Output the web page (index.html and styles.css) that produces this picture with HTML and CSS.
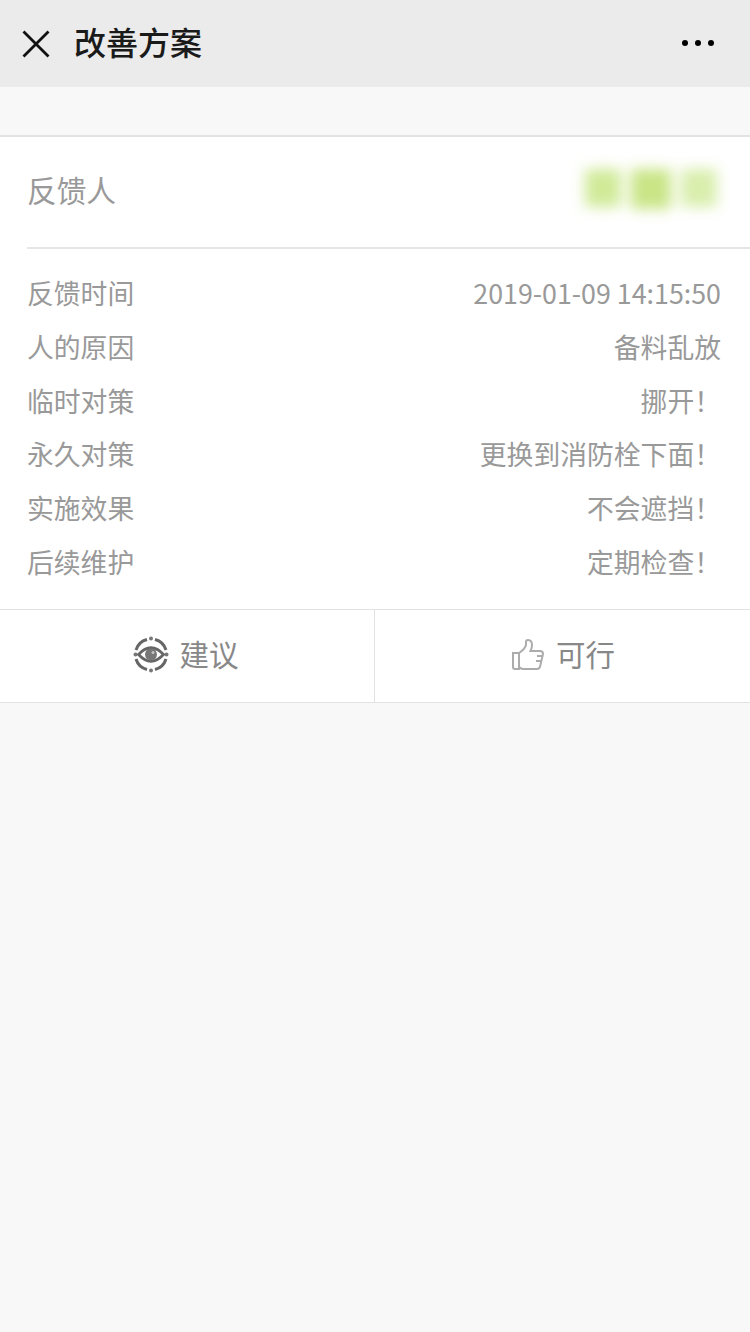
FILE: index.html
```html
<!DOCTYPE html>
<html lang="zh-CN">
<head>
    <meta charset="UTF-8">
    <meta name="viewport" content="width=device-width, initial-scale=1.0">
    <title>改善方案</title>
    <link rel="stylesheet" href="styles.css">
</head>
<body>
    <header class="topbar">
        <svg class="close-icon" width="28" height="28" viewBox="0 0 28 28">
            <path d="M1.500 1.500L26.500 26.500M26.500 1.500L1.500 26.500" stroke="#111" stroke-width="2.800" fill="none"/>
        </svg>
        <h1>改善方案</h1>
        <div class="more">
            <span></span><span></span><span></span>
        </div>
    </header>
    <div class="card">
        <div class="person">
            <span class="label">反馈人</span>
            <div class="blurred">
                <span></span><span class="strong"></span><span class="faint"></span>
            </div>
        </div>
        <div class="details">
            <div class="row"><span>反馈时间</span><span>2019-01-09 14:15:50</span></div>
            <div class="row"><span>人的原因</span><span>备料乱放</span></div>
            <div class="row"><span>临时对策</span><span>挪开！</span></div>
            <div class="row"><span>永久对策</span><span>更换到消防栓下面！</span></div>
            <div class="row"><span>实施效果</span><span>不会遮挡！</span></div>
            <div class="row"><span>后续维护</span><span>定期检查！</span></div>
        </div>
    </div>
    <div class="actions">
        <div class="action">
            <svg width="36" height="37" viewBox="0 0 36 37" fill="none">
                <path d="M3 14A15.500 15.500 0 0 1 14 3.500M22 3.500A15.500 15.500 0 0 1 33 14M33 23A15.500 15.500 0 0 1 22 33.500M14 33.500A15.500 15.500 0 0 1 3 23" stroke="#666" stroke-width="3"/>
                <circle cx="18" cy="2.500" r="2" fill="#777"/>
                <circle cx="18" cy="34.500" r="2" fill="#777"/>
                <circle cx="2.500" cy="18.500" r="2" fill="#777"/>
                <circle cx="33.500" cy="18.500" r="2" fill="#777"/>
                <path d="M5.500 18.500Q18 5 30.500 18.500Q18 32 5.500 18.500Z" stroke="#666" stroke-width="2.800"/>
                <circle cx="18" cy="18.500" r="6" fill="#777"/>
                <circle cx="20" cy="16.500" r="1.500" fill="#c4c4c4"/>
            </svg>
            <span>建议</span>
        </div>
        <div class="action">
            <svg width="32" height="32" viewBox="0 0 32 32" fill="none" stroke="#acacac" stroke-width="2">
                <path d="M1 14H7V30H3Q1 30 1 28Z"/>
                <path d="M7 14Q13 10 14 6V3Q14 1 16 1Q20 1 20 6Q20 9 18.500 12H28Q31 12 31 15L28 28Q27 30 25 30H11Q9 30 7 28"/>
                <path d="M25 17H30M24 22H29"/>
            </svg>
            <span>可行</span>
        </div>
    </div>
</body>
</html>
```

FILE: styles.css
```css
body {
    font-family: "Noto Sans CJK SC", "Liberation Sans", sans-serif;
    background-color: #f8f8f8;
    color: #999;
    margin: 0;
    padding: 0;
}
.topbar {
    display: flex;
    align-items: center;
    height: 87px;
    padding: 0 36px 0 22px;
    background-color: #ebebeb;
}
.close-icon {
    margin-right: 24px;
}
.topbar h1 {
    flex: 1;
    margin: 0;
    padding-bottom: 6px;
    font-size: 32px;
    font-weight: 500;
    color: #1a1a1a;
}
.more {
    display: flex;
    gap: 7px;
    padding-bottom: 2px;
}
.more span {
    width: 6px;
    height: 6px;
    border-radius: 50%;
    background-color: #000;
}
.card {
    margin-top: 48px;
    padding-bottom: 20px;
    background-color: #fff;
    border-top: 2px solid #e2e2e2;
    border-bottom: 1px solid #e2e2e2;
}
.person {
    display: flex;
    justify-content: space-between;
    align-items: center;
    height: 110px;
    margin-left: 27px;
    padding-right: 33px;
    border-bottom: 2px solid #e6e6e6;
    font-size: 29.700px;
}
.label {
    padding-bottom: 5px;
}
.blurred {
    display: flex;
    gap: 10px;
    padding-bottom: 6px;
    filter: blur(7px);
}
.blurred span {
    width: 36px;
    height: 38px;
    background-color: #d0ea98;
}
.blurred .strong {
    width: 40px;
    height: 40px;
    background-color: #c9e586;
}
.blurred .faint {
    background-color: #d9eead;
}
.details {
    padding: 17px 29px 0 27px;
}
.row {
    display: flex;
    justify-content: space-between;
    height: 53.800px;
    line-height: 53.800px;
    font-size: 26.800px;
}
.actions {
    display: flex;
    height: 92px;
    background-color: #fff;
    border-bottom: 1px solid #e2e2e2;
}
.action {
    flex: 1;
    display: flex;
    justify-content: center;
    align-items: center;
    gap: 10px;
    padding: 0 2px 2px 0;
    font-size: 29.500px;
    color: #888;
}
.action span {
    padding-bottom: 3px;
}
.action + .action {
    flex: none;
    box-sizing: border-box;
    width: 376px;
    gap: 12px;
    padding: 0 0 2px 2px;
    border-left: 1px solid #e2e2e2;
}
```
